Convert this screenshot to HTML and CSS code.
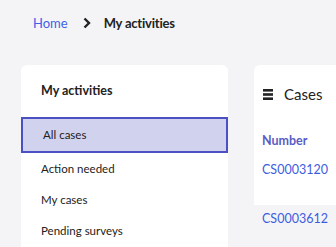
FILE: index.html
```html
<!DOCTYPE html>
<html>
<head>
  <title>My activities</title>
  <link rel="stylesheet" href="styles.css">
</head>
<body>

  <nav class="breadcrumb">
    <a href="#" class="crumb-link">Home</a>
    <svg class="crumb-sep" width="8" height="12" viewBox="0 0 8 12">
      <path d="M1.5 1.5 L6 6 L1.5 10.5" fill="none" stroke="#222" stroke-width="2.4"/>
    </svg>
    <span class="crumb-current">My activities</span>
  </nav>

  <div class="layout">
    <aside class="card side">
      <h2 class="side-title">My activities</h2>
      <ul class="side-list">
        <li class="side-item active">All cases</li>
        <li class="side-item">Action needed</li>
        <li class="side-item">My cases</li>
        <li class="side-item">Pending surveys</li>
      </ul>
    </aside>

    <section class="card cases">
      <h2 class="cases-title">
        <svg width="10" height="11" viewBox="0 0 10 11">
          <rect x="0" y="0" width="10" height="2.6" fill="#222"/>
          <rect x="0" y="4.2" width="10" height="2.6" fill="#222"/>
          <rect x="0" y="8.4" width="10" height="2.6" fill="#222"/>
        </svg>
        Cases
      </h2>
      <div class="col-head">Number</div>
      <div class="case-row"><a href="#">CS0003120</a></div>
      <div class="case-row alt"><a href="#">CS0003612</a></div>
    </section>
  </div>

</body>
</html>
```

FILE: styles.css
```css
body {
  margin: 0;
  background-color: #f4f4f6;
  font-family: Lato, "Liberation Sans", sans-serif;
  color: #222;
  overflow: hidden;
}

.breadcrumb {
  display: flex;
  align-items: center;
  height: 45px;
  padding-left: 33px;
  font-size: 13px;
}

.crumb-link {
  color: #3f5fe6;
  text-decoration: none;
}

.crumb-sep {
  margin: 0 13px 0 15px;
}

.crumb-current {
  font-weight: bold;
  letter-spacing: -0.2px;
}

.layout {
  display: flex;
  gap: 26px;
  padding: 20px 0 0 21px;
}

.card {
  background-color: #fff;
  border-radius: 6px;
  height: 230px;
  flex-shrink: 0;
  overflow: hidden;
}

.side {
  width: 207px;
}

.side-title {
  margin: 0;
  padding: 18px 20px 0;
  height: 34px;
  font-size: 12.5px;
  font-weight: bold;
}

.side-list {
  list-style: none;
  margin: 0;
  padding: 0;
}

.side-item {
  height: 31px;
  line-height: 31px;
  padding-left: 20px;
  font-size: 11.5px;
}

.side-item.active {
  height: 32px;
  line-height: 32px;
  background-color: #d1d2ee;
  border: 2px solid #4b50c2;
}

.cases {
  width: 200px;
}

.cases-title {
  display: flex;
  align-items: center;
  gap: 11px;
  margin: 0;
  padding: 11px 0 13px 9px;
  height: 36px;
  font-size: 15px;
  font-weight: normal;
}

.col-head {
  padding-left: 8px;
  height: 32px;
  line-height: 32px;
  font-size: 12.5px;
  font-weight: bold;
  color: #5a5dc4;
}

.case-row {
  padding-left: 8px;
  height: 48px;
  line-height: 26px;
  font-size: 12.5px;
}

.case-row.alt {
  background-color: #f4f4f7;
  line-height: 28px;
}

.case-row a {
  color: #3d5ddf;
  text-decoration: none;
}
```
